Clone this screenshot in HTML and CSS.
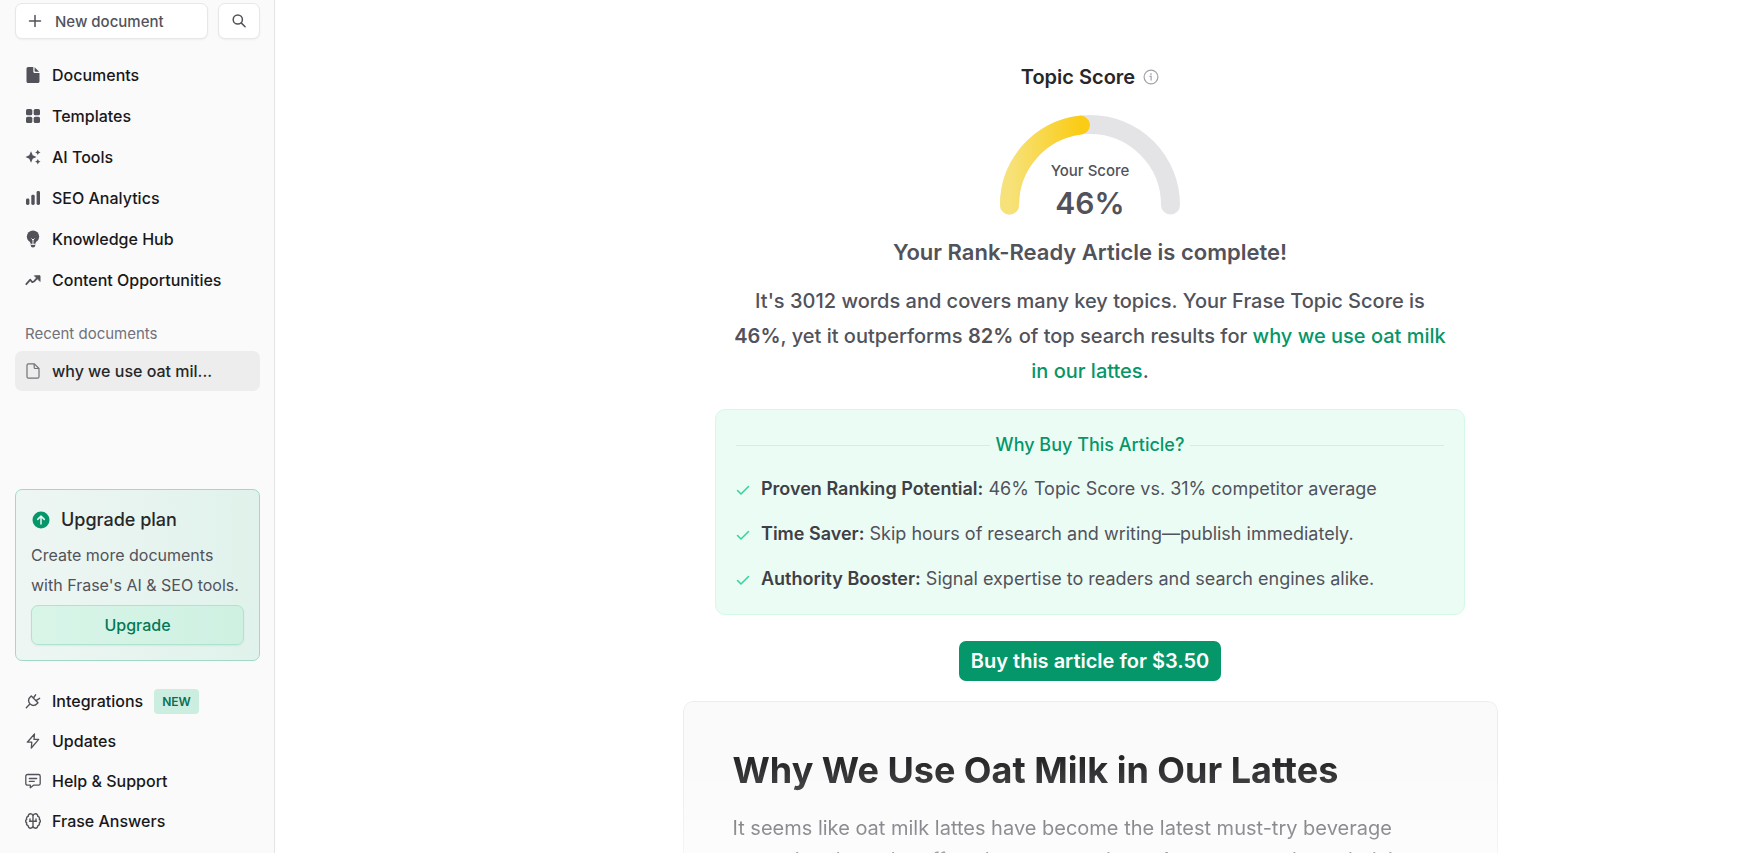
FILE: index.html
```html
<!DOCTYPE html>
<html lang="en">
<head>
<meta charset="utf-8">
<title>Frase</title>
<link rel="stylesheet" href="styles.css">
</head>
<body>
<div class="app">
  <aside class="sidebar">
    <div class="sidebar-top">
      <button class="new-doc" type="button">
        <svg class="icon" viewBox="0 0 16 16" fill="none" stroke="currentColor" stroke-width="1.5" stroke-linecap="round"><path d="M8 2.5v11M2.5 8h11"/></svg>
        New document
      </button>
      <button class="search" type="button" aria-label="Search">
        <svg class="icon" viewBox="0 0 16 16" fill="none" stroke="currentColor" stroke-width="1.5" stroke-linecap="round"><circle cx="6.8" cy="6.5" r="4.6"/><path d="M10.2 9.9l3.9 3.9"/></svg>
      </button>
    </div>
    <nav class="nav">
      <a class="nav-item" href="#"><svg class="icon" viewBox="0 0 16 16" fill="currentColor"><path d="M3.2 0h5.1v4.4c0 .9.6 1.5 1.5 1.5h4.7v8.300c0 1-.7 1.800-1.700 1.800H3.200c-1 0-1.700-.8-1.700-1.800V1.800C1.500.8 2.200 0 3.200 0z"/><path d="M9.600.3l4.600 4.500h-3.700c-.5 0-.9-.3-.9-.8z"/></svg>Documents</a>
      <a class="nav-item" href="#"><svg class="icon" viewBox="0 0 16 16" fill="currentColor"><rect x="1" y="1" width="6.300" height="6.300" rx="1.600"/><rect x="8.700" y="1" width="6.300" height="6.300" rx="1.600"/><rect x="1" y="8.700" width="6.300" height="6.300" rx="1.600"/><rect x="8.700" y="8.700" width="6.300" height="6.300" rx="1.600"/></svg>Templates</a>
      <a class="nav-item" href="#"><svg class="icon" viewBox="0 0 16 16" fill="currentColor"><path d="M6 2.200l1.700 4.100L11.500 8 7.700 9.700 6 13.800 4.300 9.700.5 8l3.800-1.700z"/><path d="M12.800.7l.9 1.800 1.800.9-1.800.9-.9 1.800-.9-1.800-1.800-.9 1.800-.9zM12.800 10l.9 1.800 1.800.9-1.800.9-.9 1.800-.9-1.800-1.800-.9 1.800-.9z"/></svg>AI Tools</a>
      <a class="nav-item" href="#"><svg class="icon" viewBox="0 0 16 16" fill="currentColor"><rect x="1" y="8.500" width="3.400" height="6.500" rx="1.400"/><rect x="6.300" y="4.800" width="3.400" height="10.200" rx="1.400"/><rect x="11.600" y="1" width="3.400" height="14" rx="1.400"/></svg>SEO Analytics</a>
      <a class="nav-item" href="#"><svg class="icon icon-tall" viewBox="0 0 16 18"><circle cx="8" cy="6.600" r="6.200" fill="currentColor"/><path d="M4.500 10.500h7l-1.300 3.500v1.500c0 1.200-.9 2-2.200 2s-2.200-.8-2.200-2V14z" fill="currentColor"/><path d="M8 15V9.500M6.500 8.500L8 10l1.500-1.500M6 14.300h4" fill="none" stroke="#fafafa" stroke-width="1"/></svg>Knowledge Hub</a>
      <a class="nav-item" href="#"><svg class="icon" viewBox="0 0 16 16" fill="none" stroke="currentColor" stroke-width="1.800" stroke-linecap="round" stroke-linejoin="round"><path d="M1.300 12.200l4-4.500 2 2.500 2-1 3.700-4"/><path d="M9.800 3.800H15V9z" fill="currentColor" stroke-width="1"/></svg>Content Opportunities</a>
    </nav>
    <div class="recent">
      <div class="recent-title">Recent documents</div>
      <a class="nav-item nav-item-active" href="#"><svg class="icon" viewBox="0 0 16 16" fill="none" stroke="#71717a" stroke-width="1.200" stroke-linejoin="round"><path d="M3.500.8h5.800l4.700 4.700v8.200c0 .9-.6 1.500-1.500 1.500h-9c-.9 0-1.500-.6-1.500-1.500V2.300C2 1.400 2.600.8 3.500.8z"/><path d="M9.200.8v3.700c0 .6.4 1 1 1H14"/></svg>why we use oat mil...</a>
    </div>
    <section class="upgrade">
      <h2 class="upgrade-title"><svg class="upgrade-icon" viewBox="0 0 18 18"><circle cx="9" cy="9" r="8.500" fill="#059669"/><path d="M9 13V5.300M5.700 8.400L9 5.100l3.300 3.300" fill="none" stroke="#e8f7f1" stroke-width="1.500" stroke-linecap="round" stroke-linejoin="round"/></svg>Upgrade plan</h2>
      <p class="upgrade-text">Create more documents with Frase's AI &amp; SEO tools.</p>
      <button class="upgrade-btn" type="button">Upgrade</button>
    </section>
    <nav class="nav nav-bottom">
      <a class="nav-item" href="#"><svg class="icon" viewBox="0 0 16 16" fill="none" stroke="currentColor" stroke-width="1.400" stroke-linecap="round" stroke-linejoin="round"><path d="M6.300 3l6.700 6.700-1.300 1.300a4.300 4.300 0 0 1-6.100.3L4.700 10.400A4.300 4.300 0 0 1 5 4.300zM8.400 5L10.600 1.800M11 7.600l3.600-2.300M4.400 11.600L1.300 14.700"/></svg>Integrations<span class="badge">NEW</span></a>
      <a class="nav-item" href="#"><svg class="icon" viewBox="0 0 16 16" fill="none" stroke="currentColor" stroke-width="1.300" stroke-linejoin="round"><path d="M9.500 1L2.300 9.200h4.500L6.300 15l7.400-8.600H9z"/></svg>Updates</a>
      <a class="nav-item" href="#"><svg class="icon" viewBox="0 0 16 16" fill="none" stroke="currentColor" stroke-width="1.300" stroke-linecap="round" stroke-linejoin="round"><path d="M2.500 1.500h11c1 0 1.700.7 1.700 1.700v7.300c0 1-.7 1.700-1.700 1.700H8.500L5.300 14.700v-2.500H2.500c-1 0-1.700-.7-1.700-1.700V3.200c0-1 .7-1.700 1.700-1.700zM4.300 5.500h7.400M4.300 8.300h5"/></svg>Help &amp; Support</a>
      <a class="nav-item" href="#"><svg class="icon" viewBox="0 0 16 16" fill="none" stroke="currentColor" stroke-width="1.400" stroke-linecap="round" stroke-linejoin="round"><path d="M8 2.800C7.600 1.300 6.500.8 5.500.8 4 .8 3.200 2 3.300 3.300 1.800 3.700 1.200 5 1.700 6.300.3 7.200.3 9 1.700 9.800c-.5 1.400.2 2.600 1.600 3-.1 1.300.8 2.400 2.200 2.400 1.200 0 2.200-.7 2.500-2zM8 2.800C8.400 1.300 9.500.8 10.500.8 12 .8 12.800 2 12.700 3.300c1.500.4 2.100 1.700 1.600 3 1.400.9 1.400 2.700 0 3.500.5 1.400-.2 2.600-1.600 3 .1 1.300-.8 2.400-2.200 2.400-1.200 0-2.200-.7-2.500-2M4.500 8.300h7M5 6v2.300M11 6v2.300"/></svg>Frase Answers</a>
    </nav>
  </aside>

  <main class="main">
    <section class="score">
      <h2 class="score-title">Topic Score
        <svg class="info" viewBox="0 0 16 16" fill="none" stroke="#a1a1aa" stroke-width="1.200"><circle cx="8" cy="8" r="6.900"/><path d="M6.900 7.300h1.200v3.800M8 4.600v1" stroke-linecap="round"/></svg>
      </h2>
      <div class="gauge">
        <svg class="gauge-arc" viewBox="0 0 180 100" fill="none" stroke-width="19" stroke-linecap="round">
          <defs><linearGradient id="fill" x1="0" y1="0" x2="1" y2="0"><stop offset="0" stop-color="#f7e27a"/><stop offset="1" stop-color="#facc15"/></linearGradient></defs>
          <path d="M9.500 90A80.500 80.500 0 0 1 170.500 90" stroke="#e4e4e7"/>
          <path d="M9.500 90A80.500 80.500 0 0 1 80.400 10.100" stroke="url(#fill)"/>
        </svg>
        <div class="gauge-label">
          <span class="gauge-caption">Your Score</span>
          <strong class="gauge-value">46%</strong>
        </div>
      </div>
    </section>
    <h1 class="headline">Your Rank-Ready Article is complete!</h1>
    <p class="summary">It's 3012 words and covers many key topics. Your Frase Topic Score is <b>46%</b>, yet it outperforms <b>82%</b> of top search results for <a class="query" href="#">why we use oat milk in our lattes</a>.</p>
    <section class="reasons">
      <h3 class="reasons-title">Why Buy This Article?</h3>
      <ul class="reasons-list">
        <li class="reason"><svg class="check" viewBox="0 0 14 14" fill="none" stroke="#34d399" stroke-width="1.500" stroke-linecap="round" stroke-linejoin="round"><path d="M1.500 8.500l3.500 3.500L12.500 4.500"/></svg><span><b>Proven Ranking Potential:</b> 46% Topic Score vs. 31% competitor average</span></li>
        <li class="reason"><svg class="check" viewBox="0 0 14 14" fill="none" stroke="#34d399" stroke-width="1.500" stroke-linecap="round" stroke-linejoin="round"><path d="M1.500 8.500l3.500 3.500L12.500 4.500"/></svg><span><b>Time Saver:</b> Skip hours of research and writing—publish immediately.</span></li>
        <li class="reason"><svg class="check" viewBox="0 0 14 14" fill="none" stroke="#34d399" stroke-width="1.500" stroke-linecap="round" stroke-linejoin="round"><path d="M1.500 8.500l3.500 3.500L12.500 4.500"/></svg><span><b>Authority Booster:</b> Signal expertise to readers and search engines alike.</span></li>
      </ul>
    </section>
    <button class="buy" type="button">Buy this article for $3.50</button>
    <article class="preview">
      <h2 class="preview-title">Why We Use Oat Milk in Our Lattes</h2>
      <p class="preview-text">It seems like oat milk lattes have become the latest must-try beverage sweeping through coffee shops everywhere. As more people seek dairy-free options, oat milk has become a favorite.</p>
    </article>
  </main>
</div>
</body>
</html>
```
FILE: styles.css
```css
*, *::before, *::after { box-sizing: border-box; }

body {
  margin: 0;
  font-family: Inter, "Liberation Sans", sans-serif;
  color: #27272a;
  background: #fff;
}

h1, h2, h3, p, ul { margin: 0; padding: 0; }
button { font: inherit; cursor: pointer; }
a { color: inherit; text-decoration: none; }

.app {
  display: flex;
  height: 100vh;
  overflow: hidden;
}

/* Sidebar */
.sidebar {
  flex: none;
  width: 275px;
  display: flex;
  flex-direction: column;
  padding: 3px 14px 12px 15px;
  background: #fafafa;
  border-right: 1px solid #e4e4e7;
}

.sidebar-top { display: flex; gap: 10px; }

.new-doc, .search {
  display: flex;
  align-items: center;
  height: 36px;
  background: #fff;
  border: 1px solid #e7e7ea;
  border-radius: 7px;
  box-shadow: 0 1px 2px rgba(0, 0, 0, 0.05);
  color: #52525b;
}

.new-doc {
  flex: 1;
  gap: 12px;
  padding: 0 11px;
  font-size: 15px;
  font-weight: 500;
}

.search { width: 42px; justify-content: center; padding: 0; }

.icon { flex: none; width: 16px; height: 16px; color: #52525b; }
.icon-tall { height: 18px; }

.nav { display: flex; flex-direction: column; gap: 1px; margin-top: 16px; }

.nav-item {
  display: flex;
  align-items: center;
  gap: 11px;
  height: 40px;
  padding: 0 10px;
  border-radius: 7px;
  font-size: 16px;
  font-weight: 500;
  color: #18181b;
}

.recent { margin-top: 24px; }
.recent-title {
  padding: 0 10px;
  margin-bottom: 7px;
  font-size: 15px;
  line-height: 20px;
  color: #71717a;
}
.nav-item-active { background: #ededed; color: #27272a; }

.upgrade {
  margin-top: auto;
  padding: 15px;
  border: 1px solid #a0dac5;
  border-radius: 7px;
  background: linear-gradient(to right, #eef6f3, #e0f2eb);
}
.upgrade-title {
  display: flex;
  align-items: center;
  gap: 11px;
  font-size: 18px;
  line-height: 30px;
  font-weight: 500;
}
.upgrade-icon { width: 18px; height: 18px; margin-left: 1px; }
.upgrade-text {
  margin: 5px 0;
  font-size: 16px;
  line-height: 30px;
  color: #52525b;
}
.upgrade-btn {
  width: 100%;
  height: 40px;
  border: 1px solid #afe3d0;
  border-radius: 7px;
  background: linear-gradient(to right, #d8f5e8, #cef1e2);
  box-shadow: 0 1px 2px rgba(0, 0, 0, 0.06);
  font-weight: 500;
  color: #047857;
}

.nav-bottom { gap: 0; margin-top: 20px; }
.badge {
  padding: 0 8px;
  border-radius: 4px;
  background: #cbeee0;
  font-size: 12px;
  line-height: 25px;
  font-weight: 600;
  color: #0b6e55;
}

/* Main column */
.main {
  flex: 1;
  min-width: 0;
  display: flex;
  flex-direction: column;
  align-items: center;
  padding: 62px 0 0 152px;
  overflow: hidden;
}
.main > * { flex: none; }

.score { display: flex; flex-direction: column; align-items: center; gap: 23px; }
.score-title {
  display: flex;
  align-items: center;
  gap: 8px;
  font-size: 20px;
  line-height: 30px;
  font-weight: 600;
}
.info { width: 16px; height: 16px; }

.gauge { display: grid; justify-items: center; }
.gauge-arc { grid-area: 1 / 1; width: 180px; height: 100px; }
.gauge-label {
  grid-area: 1 / 1;
  display: flex;
  flex-direction: column;
  align-items: center;
  padding-top: 46px;
  color: #52525b;
}
.gauge-caption { font-size: 15px; line-height: 20px; font-weight: 500; }
.gauge-value { margin-top: 7px; font-size: 30px; line-height: 30px; font-weight: 600; }

.headline {
  margin-top: 19px;
  font-size: 22px;
  line-height: 30px;
  font-weight: 600;
  color: #52525b;
}

.summary {
  width: 100%;
  max-width: 750px;
  margin-top: 17px;
  padding: 0 16px;
  font-size: 20px;
  line-height: 35px;
  font-weight: 500;
  text-align: center;
  color: #52525b;
}
.summary b { font-weight: 600; }
.query { color: #059669; }

.reasons {
  width: 100%;
  max-width: 750px;
  margin-top: 20px;
  padding: 20px;
  border: 1px solid #d5f9e7;
  border-radius: 10px;
  background: #ebfcf5;
}
.reasons-title {
  display: flex;
  align-items: center;
  gap: 6px;
  font-size: 18px;
  line-height: 30px;
  font-weight: 500;
  color: #059669;
}
.reasons-title::before, .reasons-title::after {
  content: "";
  flex: 1;
  height: 1px;
  background: #c5f5df;
}
.reasons-list {
  display: flex;
  flex-direction: column;
  gap: 15px;
  margin-top: 14px;
  list-style: none;
}
.reason {
  display: flex;
  align-items: center;
  gap: 11px;
  font-size: 18px;
  line-height: 30px;
  color: #52525b;
}
.reason b { font-weight: 600; color: #3f3f46; }
.check { flex: none; width: 14px; height: 14px; }

.buy {
  margin-top: 26px;
  height: 40px;
  padding: 0 12px;
  border: 0;
  border-radius: 7px;
  background: #059669;
  font-size: 20px;
  font-weight: 600;
  color: #fff;
}

.preview {
  width: 100%;
  max-width: 815px;
  margin-top: 20px;
  padding: 40px 49px;
  border: 1px solid #ececee;
  border-radius: 10px;
  background: #fafafa;
  -webkit-mask-image: linear-gradient(#000 60px, rgba(0, 0, 0, 0.5) 160px, transparent 240px);
  mask-image: linear-gradient(#000 60px, rgba(0, 0, 0, 0.5) 160px, transparent 240px);
}
.preview-title { font-size: 36px; line-height: 56px; font-weight: 700; color: #27272a; }
.preview-text { margin-top: 14px; font-size: 20px; line-height: 32px; color: #52525b; }
```
